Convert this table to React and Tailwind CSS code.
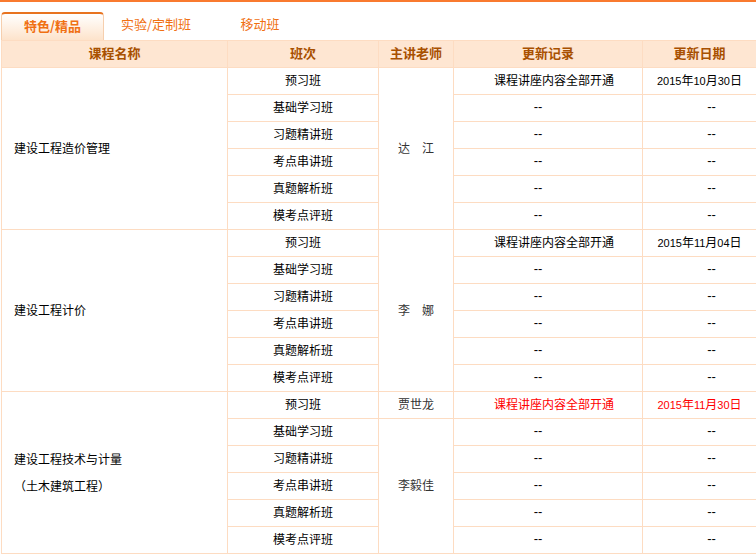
import React from 'react'

const classes = ['预习班', '基础学习班', '习题精讲班', '考点串讲班', '真题解析班', '模考点评班']

const groups = [
  { name: ['建设工程造价管理'], teacher: '达　江', date: '2015年10月30日' },
  { name: ['建设工程计价'], teacher: '李　娜', date: '2015年11月04日' },
  { name: ['建设工程技术与计量', '（土木建筑工程）'], teacher: '李毅佳', first: '贾世龙', date: '2015年11月30日', hot: true },
]

const td = 'border border-[#fddcc2] h-[27px] p-0 pb-[2px] text-center'

// digits in a narrow latin face, like the original page
const DateText = ({ text }) =>
  text.split(/(\d+)/).map((part, i) =>
    /\d/.test(part) ? (
      <span key={i} className="font-['Liberation_Sans'] text-[11px]">{part}</span>
    ) : (
      <span key={i}>{part}</span>
    )
  )

const Dash = () => <span className="font-['Liberation_Sans'] text-[13px]">--</span>

const App = () => {
  return (
    <div className="w-[756px] h-[554px] bg-white overflow-hidden text-[12px] text-black" style={{ fontFamily: '"Noto Sans CJK SC", "Liberation Sans", sans-serif' }}>
      <div className="h-[2px] bg-[#f97a2f]" />
      <div className="flex h-[38px] items-end pl-px">
        <div className="w-[103px] h-[28px] pb-[3px] rounded-t-[4px] border-t-2 border-x border-[#e8731f] border-x-[#f6cfae] bg-gradient-to-b from-white to-[#fde3cb] flex items-center justify-center text-[13px] font-bold text-[#f07013]">
          特色/精品
        </div>
        <div className="w-[104px] h-[28px] pb-[4px] flex items-center justify-center text-[13px] text-[#f07013]">实验/定制班</div>
        <div className="w-[104px] h-[28px] pb-[4px] flex items-center justify-center text-[13px] text-[#f07013]">移动班</div>
      </div>
      <div className="pl-px">
        <table className="border-collapse w-[755px] table-fixed">
          <colgroup>
            <col className="w-[226px]" />
            <col className="w-[151px]" />
            <col className="w-[75px]" />
            <col className="w-[189px]" />
            <col className="w-[114px]" />
          </colgroup>
          <thead>
            <tr className="bg-[#fee6d2] text-[#a85000] font-bold text-[13px]">
              <th className={td}>课程名称</th>
              <th className={td}>班次</th>
              <th className={td}>主讲老师</th>
              <th className={td}>更新记录</th>
              <th className={td}>更新日期</th>
            </tr>
          </thead>
          <tbody>
            {groups.map((g, gi) =>
              classes.map((c, i) => (
                <tr key={gi + '-' + i}>
                  {i === 0 && (
                    <td rowSpan={6} className={td + ' text-left pl-3 leading-[27px]'}>
                      {g.name.map((n) => (
                        <div key={n}>{n}</div>
                      ))}
                    </td>
                  )}
                  <td className={td}>{c}</td>
                  {g.first && i === 0 && <td className={td + ' text-[#333]'}>{g.first}</td>}
                  {g.first && i === 1 && <td rowSpan={5} className={td + ' text-[#333]'}>{g.teacher}</td>}
                  {!g.first && i === 0 && <td rowSpan={6} className={td + ' text-[#333]'}>{g.teacher}</td>}
                  {i === 0 ? (
                    <td className={td + ' pl-[12px]' + (g.hot ? ' text-[#ff0000]' : '')}>课程讲座内容全部开通</td>
                  ) : (
                    <td className={td + ' pr-[20px]'}><Dash /></td>
                  )}
                  {i === 0 ? (
                    <td className={td + (g.hot ? ' text-[#ff0000]' : '')}><DateText text={g.date} /></td>
                  ) : (
                    <td className={td + ' pl-[24px]'}><Dash /></td>
                  )}
                </tr>
              ))
            )}
          </tbody>
        </table>
      </div>
    </div>
  )
}

export default App
